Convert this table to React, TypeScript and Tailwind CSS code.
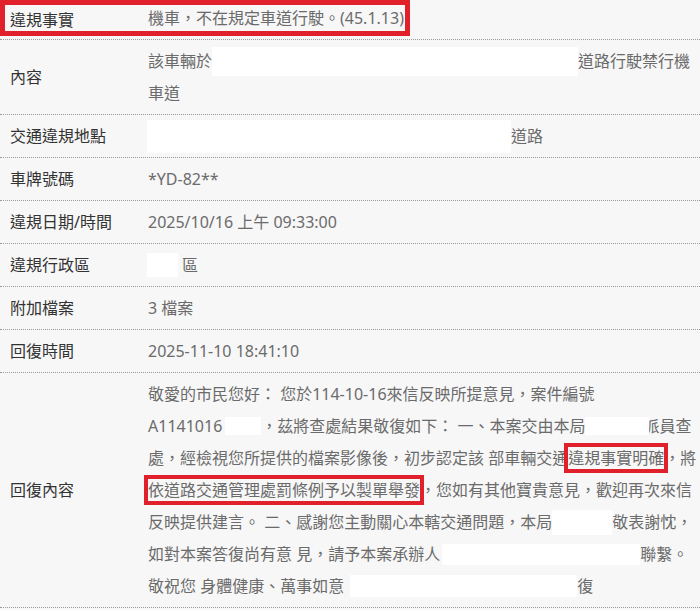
import React from 'react';

const FONT = '"Noto Sans", "Noto Sans CJK TC", sans-serif';

// white blocks that hide personal data in the screenshot
const Mask = ({ w, h, className = '' }: { w: number; h: number; className?: string }) => (
  <span className={`inline-block shrink-0 bg-white ${className}`} style={{ width: w, height: h }} />
);

const Mark = ({ children }: { children: React.ReactNode }) => (
  <span className="leading-[22px] ring-4 ring-[#e0202b]">{children}</span>
);

const Line = ({ children }: { children: React.ReactNode }) => (
  <div className="flex items-center h-[32px] whitespace-pre">{children}</div>
);

interface RowProps {
  label: string;
  children: React.ReactNode;
  first?: boolean;
}

const Row = ({ label, children, first }: RowProps) => (
  <div className="flex border-b border-dotted border-[#9a9a9a]">
    <div className="w-[148px] shrink-0 pl-[10px] flex items-center text-[#333333]">{label}</div>
    <div className={`flex-1 text-[#6b6b6b] ${first ? 'pt-[2px] pb-[5px]' : 'py-[5px]'}`}>{children}</div>
  </div>
);

export default function App() {
  return (
    <div
      className="relative w-[700px] h-[610px] overflow-hidden bg-[#f7f7f7] text-[16px] leading-[32px]"
      style={{ fontFamily: FONT }}
    >
      <Row label="違規事實" first>
        <Line>機車，不在規定車道行駛。(45.1.13)</Line>
      </Row>
      <Row label="內容">
        <Line>
          該車輛於
          <Mask w={366} h={29} />
          道路行駛禁行機
        </Line>
        <Line>車道</Line>
      </Row>
      <Row label="交通違規地點">
        <Line>
          <Mask w={364} h={33} className="-ml-[1px]" />
          道路
        </Line>
      </Row>
      <Row label="車牌號碼">
        <Line>*YD-82**</Line>
      </Row>
      <Row label="違規日期/時間">
        <Line>2025/10/16 上午 09:33:00</Line>
      </Row>
      <Row label="違規行政區">
        <Line>
          <Mask w={31} h={24} className="-ml-[1px] mr-[4px]" />
          區
        </Line>
      </Row>
      <Row label="附加檔案">
        <Line>3 檔案</Line>
      </Row>
      <Row label="回復時間">
        <Line>2025-11-10 18:41:10</Line>
      </Row>
      <Row label="回復內容">
        <Line>敬愛的市民您好： 您於114-10-16來信反映所提意見，案件編號</Line>
        <Line>
          A1141016
          <Mask w={36} h={18} className="ml-[3px]" />
          ，茲將查處結果敬復如下： 一、本案交由本局
          <Mask w={64} h={18} className="relative z-10 -mr-[6px]" />
          派員查
        </Line>
        <Line>
          處，經檢視您所提供的檔案影像後，初步認定該 部車輛交通<Mark>違規事實明確</Mark>，將
        </Line>
        <Line>
          <Mark>依道路交通管理處罰條例予以製單舉發</Mark>，您如有其他寶貴意見，歡迎再次來信
        </Line>
        <Line>
          反映提供建言。 二、感謝您主動關心本轄交通問題，本局
          <Mask w={60} h={25} />
          敬表謝忱，
        </Line>
        <Line>
          如對本案答復尚有意 見，請予本案承辦人
          <Mask w={198} h={21} className="ml-[2px]" />
          聯繫。
        </Line>
        <Line>
          敬祝您 身體健康、萬事如意
          <Mask w={227} h={22} className="ml-[6px]" />
          復
        </Line>
      </Row>

      {/* annotation frame around the first row */}
      <div className="absolute left-0 top-0 w-[410px] h-[36px] border-[5px] border-[#e0202b] pointer-events-none" />
    </div>
  );
}
